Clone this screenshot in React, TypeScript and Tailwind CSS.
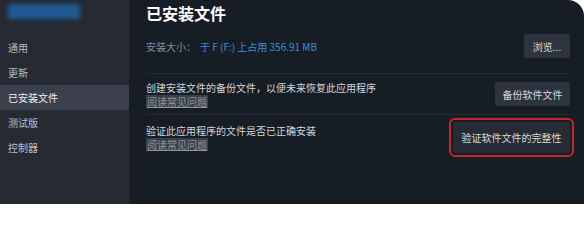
import React from 'react'

const font = { fontFamily: '"Noto Sans CJK SC", "Noto Sans", sans-serif' }

const navItems = ['通用', '更新', '已安装文件', '测试版', '控制器']

function FaqLink() {
  return (
    <span className="self-start bg-[#3a404a] px-[1px] text-[10px] leading-[13px] text-[#8d949c] underline">
      阅读常见问题
    </span>
  )
}

export default function App() {
  return (
    <div className="flex h-[204px] w-[584px] overflow-hidden bg-white" style={font}>
      {/* Sidebar */}
      <div className="flex w-[129px] flex-col bg-[#262a33]">
        <div className="ml-[8px] mt-[4px] h-[15px] w-[72px] rounded-[2px] bg-[#1f5b92] blur-[2px]" />
        <div className="mt-[16px] flex flex-col">
          {navItems.map((item) => (
            <div
              key={item}
              className={`flex h-[25px] items-center pl-[8px] text-[10px] ${
                item === '已安装文件' ? 'bg-[#3b414c] text-[#eef0f2]' : 'text-[#b9bec4]'
              }`}
            >
              {item}
            </div>
          ))}
        </div>
      </div>

      {/* Main */}
      <div className="flex flex-1 flex-col rounded-tr-[16px] bg-[#171d25] pl-[17px] pr-[14px]">
        <h1 className="mt-[4px] text-[16px] font-bold leading-[19px] text-white">已安装文件</h1>

        <div className="mt-[11px] flex h-[24px] items-center justify-between">
          <div className="flex items-center text-[10px]">
            <span className="w-[54px] text-[#858c95]">安装大小：</span>
            <span className="text-[#3b8fd9]">于 F (F:) 上占用 356.91 MB</span>
          </div>
          <button className="h-[24px] w-[46px] rounded-[2px] bg-[#2e343d] text-[10px] text-[#d6d9dc]">
            浏览...
          </button>
        </div>

        <div className="mt-[15px] h-px bg-[#242b35]" />

        <div className="flex h-[40px] items-center justify-between">
          <div className="flex flex-col gap-[1px]">
            <span className="text-[10px] leading-[13px] text-[#d3d6d9]">创建安装文件的备份文件，以便未来恢复此应用程序</span>
            <FaqLink />
          </div>
          <button className="h-[24px] w-[75px] rounded-[2px] bg-[#2e343d] text-[10px] text-[#d6d9dc]">
            备份软件文件
          </button>
        </div>

        <div className="h-px bg-[#242b35]" />

        <div className="flex h-[45px] items-center justify-between">
          <div className="flex flex-col gap-[1px]">
            <span className="text-[10px] leading-[13px] text-[#d3d6d9]">验证此应用程序的文件是否已正确安装</span>
            <FaqLink />
          </div>
          <button className="h-[31px] w-[117px] rounded-[2px] bg-[#262c35] text-[10px] text-[#d6d9dc] outline-2 outline-offset-2 outline-[#c3282b]">
            验证软件文件的完整性
          </button>
        </div>
      </div>
    </div>
  )
}
